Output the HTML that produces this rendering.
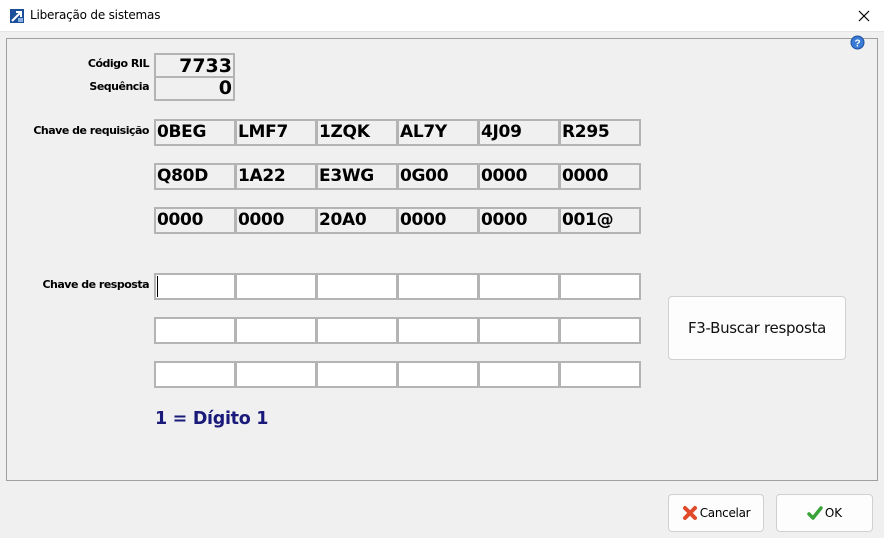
<!DOCTYPE html>
<html><head><meta charset="utf-8"><style>
*{margin:0;padding:0;box-sizing:border-box}
body{width:884px;height:538px;background:#f0f0f0;font-family:"DejaVu Sans","Liberation Sans",sans-serif;position:relative;overflow:hidden}
.a{position:absolute}
.tb{left:0;top:0;width:884px;height:32px;background:#fff;border-bottom:1px solid #e5e5e5}
.panel{left:6px;top:38px;width:872px;height:443px;border:1px solid #a0a0a0}
.lbl{font-size:11px;font-weight:bold;color:#000;text-align:right;width:140px;left:9px;letter-spacing:-0.5px}
.c{height:27px;width:82px;border:2px solid #b4b4b4;background:#f0f0f0;font-weight:bold;font-size:17px;line-height:23px;padding-left:1px;letter-spacing:-0.3px}
.w{background:#fff}
.btn{background:#fdfdfd;border:1px solid #d0d0d0;border-radius:4px;font-size:12px;color:#000;text-align:center}
</style></head><body>
<div class="a tb">
 <svg class="a" style="left:10px;top:9px" width="14" height="14"><rect width="14" height="14" fill="#1c4f99"/><path d="M2 12 L11 3 M6 3 H11 V8" stroke="#fff" stroke-width="2" fill="none"/><rect x="8" y="9" width="5" height="4" fill="#8bb0e0"/></svg>
 <div class="a" style="left:30px;top:8px;font-size:12px;color:#000;letter-spacing:-0.2px">Liberação de sistemas</div>
 <svg class="a" style="left:858px;top:10px" width="12" height="12"><path d="M1 1 L11 11 M11 1 L1 11" stroke="#000" stroke-width="1.2"/></svg>
</div>
<div class="a panel"></div>
<svg class="a" style="left:850px;top:35px" width="15" height="15"><circle cx="7.5" cy="7.5" r="6.5" fill="#3a7bd5" stroke="#1d4fa0"/><text x="7.5" y="11.5" font-size="10" font-weight="bold" fill="#fff" text-anchor="middle" font-family="Liberation Sans">?</text></svg>

<div class="a lbl" style="top:57px">Código RIL</div>
<div class="a lbl" style="top:80px">Sequência</div>
<div class="a" style="left:154px;top:53px;width:81px;height:48px;border:2px solid #b4b4b4"></div>
<div class="a" style="left:154px;top:76px;width:81px;height:2px;background:#b4b4b4"></div>
<div class="a" style="left:156px;top:53px;width:76px;text-align:right;font-weight:bold;font-size:19px;line-height:26px">7733</div>
<div class="a" style="left:156px;top:76px;width:76px;text-align:right;font-weight:bold;font-size:19px;line-height:24px">0</div>

<div class="a lbl" style="top:124px">Chave de requisição</div>
<div class="a lbl" style="top:278px">Chave de resposta</div>

<div class="a c" style="left:154px;top:119px">0BEG</div><div class="a c" style="left:235px;top:119px">LMF7</div><div class="a c" style="left:316px;top:119px">1ZQK</div><div class="a c" style="left:397px;top:119px">AL7Y</div><div class="a c" style="left:478px;top:119px">4J09</div><div class="a c" style="left:559px;top:119px">R295</div>
<div class="a c" style="left:154px;top:163px">Q80D</div><div class="a c" style="left:235px;top:163px">1A22</div><div class="a c" style="left:316px;top:163px">E3WG</div><div class="a c" style="left:397px;top:163px">0G00</div><div class="a c" style="left:478px;top:163px">0000</div><div class="a c" style="left:559px;top:163px">0000</div>
<div class="a c" style="left:154px;top:207px">0000</div><div class="a c" style="left:235px;top:207px">0000</div><div class="a c" style="left:316px;top:207px">20A0</div><div class="a c" style="left:397px;top:207px">0000</div><div class="a c" style="left:478px;top:207px">0000</div><div class="a c" style="left:559px;top:207px">001@</div>

<div class="a c w" style="left:154px;top:273px"></div><div class="a c w" style="left:235px;top:273px"></div><div class="a c w" style="left:316px;top:273px"></div><div class="a c w" style="left:397px;top:273px"></div><div class="a c w" style="left:478px;top:273px"></div><div class="a c w" style="left:559px;top:273px"></div>
<div class="a" style="left:157px;top:276px;width:1px;height:21px;background:#000"></div>
<div class="a c w" style="left:154px;top:317px"></div><div class="a c w" style="left:235px;top:317px"></div><div class="a c w" style="left:316px;top:317px"></div><div class="a c w" style="left:397px;top:317px"></div><div class="a c w" style="left:478px;top:317px"></div><div class="a c w" style="left:559px;top:317px"></div>
<div class="a c w" style="left:154px;top:361px"></div><div class="a c w" style="left:235px;top:361px"></div><div class="a c w" style="left:316px;top:361px"></div><div class="a c w" style="left:397px;top:361px"></div><div class="a c w" style="left:478px;top:361px"></div><div class="a c w" style="left:559px;top:361px"></div>

<div class="a" style="left:155px;top:409px;font-weight:bold;font-size:17.5px;color:#1a1a7a;letter-spacing:-0.3px">1 = Dígito 1</div>

<div class="a btn" style="left:668px;top:296px;width:178px;height:64px;line-height:62px;font-size:15px;color:#111;letter-spacing:-0.3px">F3-Buscar resposta</div>

<div class="a btn" style="left:668px;top:494px;width:96px;height:38px;line-height:36px;letter-spacing:-0.3px">
 <svg style="vertical-align:-4px;margin-right:2px" width="16" height="16"><path d="M3 3 L13 13 M13 3 L3 13" stroke="#e04a2a" stroke-width="4" stroke-linecap="round"/></svg>Cancelar</div>
<div class="a btn" style="left:776px;top:494px;width:97px;height:38px;line-height:36px">
 <svg style="vertical-align:-4px;margin-right:2px" width="16" height="16"><path d="M2 9 L6 13 L14 3" stroke="#3aa33a" stroke-width="3.5" fill="none" stroke-linecap="round" stroke-linejoin="round"/></svg>OK</div>
</body></html>
